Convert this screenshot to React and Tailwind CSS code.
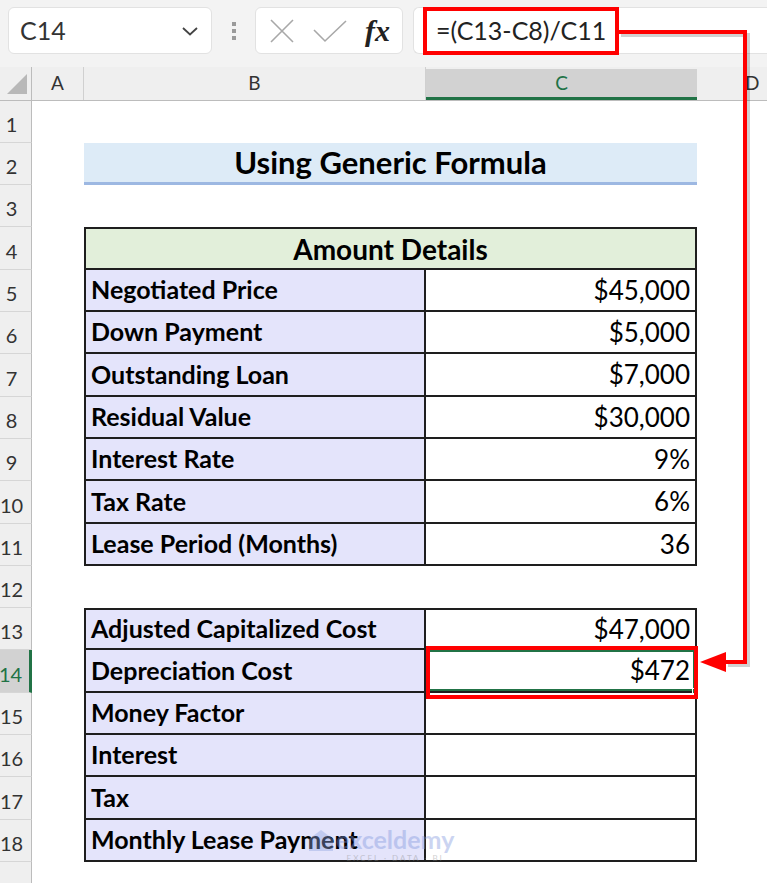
import React from "react";

const ROW_H = [42, 42, 42, 43, 42, 42, 43, 42, 42, 43, 42, 42, 42, 43, 42, 42, 43, 42];

const details = [
  ["Negotiated Price", "$45,000"],
  ["Down Payment", "$5,000"],
  ["Outstanding Loan", "$7,000"],
  ["Residual Value", "$30,000"],
  ["Interest Rate", "9%"],
  ["Tax Rate", "6%"],
  ["Lease Period (Months)", "36"],
];

const results = [
  ["Adjusted Capitalized Cost", "$47,000"],
  ["Depreciation Cost", "$472"],
  ["Money Factor", ""],
  ["Interest", ""],
  ["Tax", ""],
  ["Monthly Lease Payment", ""],
];

// one spreadsheet row: header + A + B + C + D
const Row = ({ n, h, children, active }) => (
  <div className="flex" style={{ height: h }}>
    <div
      className={
        "w-[32px] shrink-0 flex items-end justify-center pr-[8px] pb-[3px] text-[20px] border-b border-[#d6d6d6] " +
        (active
          ? "bg-[#d2d2d2] text-[#217346] border-r-[3px] border-r-[#217346]"
          : "bg-[#efefef] text-[#333] border-r border-r-[#bcbcbc]")
      }
    >
      {n}
    </div>
    <div className="w-[52px] shrink-0" />
    {children}
  </div>
);

const LabelCell = ({ text, top }) => (
  <div
    className={
      "w-[342px] shrink-0 bg-[#e4e4fb] border-l-2 border-r-2 border-b-2 border-[#1e1e1e] flex items-center pl-[5px] font-bold text-[25px] text-black whitespace-nowrap " +
      (top ? "border-t-2" : "")
    }
  >
    {text}
  </div>
);

const ValueCell = ({ text, top, selected }) => (
  <div
    className={
      "w-[271px] shrink-0 bg-white border-r-2 border-b-2 border-[#1e1e1e] flex items-center justify-end pr-[5px] text-[26px] text-black relative " +
      (top ? "border-t-2" : "")
    }
  >
    {selected && (
      <div className="absolute inset-0 border-2 border-[#217346]">
        <div className="absolute right-[-6px] bottom-[-6px] w-[7px] h-[7px] bg-[#217346] border border-white" />
      </div>
    )}
    <span className="relative">{text}</span>
  </div>
);

export default function App() {
  const cells = (i) => {
    const n = i + 1;
    if (n === 2)
      return (
        <div className="w-[613px] shrink-0 bg-[#ddebf7] border-b-[3px] border-[#9db8e2] flex items-center justify-center font-bold text-[31px] text-black">
          Using Generic Formula
        </div>
      );
    if (n === 4)
      return (
        <div className="w-[613px] shrink-0 bg-[#e2efda] border-2 border-[#1e1e1e] flex items-center justify-center font-bold text-[28px] text-black">
          Amount Details
        </div>
      );
    if (n >= 5 && n <= 11) {
      const [l, v] = details[n - 5];
      return (
        <>
          <LabelCell text={l} />
          <ValueCell text={v} />
        </>
      );
    }
    if (n >= 13) {
      const [l, v] = results[n - 13];
      return (
        <>
          <LabelCell text={l} top={n === 13} />
          <ValueCell text={v} top={n === 13} selected={n === 14} />
        </>
      );
    }
    return null;
  };

  return (
    <div className="w-[767px] h-[883px] overflow-hidden relative bg-white font-['Lato',sans-serif]">
      {/* formula bar */}
      <div className="h-[67px] bg-[#f3f3f3] flex items-start pt-[7px] pl-[8px]">
        <div className="w-[204px] h-[47px] bg-white rounded-[6px] border border-[#e2e2e2] flex items-center justify-between pl-[11px] pr-[12px]">
          <span className="text-[25px] text-[#333]">C14</span>
          <svg width="18" height="12" viewBox="0 0 18 12">
            <polyline points="2,3 9,9.5 16,3" fill="none" stroke="#444" strokeWidth="1.8" />
          </svg>
        </div>
        <div className="w-[43px] h-[47px] flex flex-col items-center justify-center gap-[3px]">
          <div className="w-[4px] h-[4px] bg-[#9a9a9a]" />
          <div className="w-[4px] h-[4px] bg-[#9a9a9a]" />
          <div className="w-[4px] h-[4px] bg-[#9a9a9a]" />
        </div>
        <div className="w-[148px] h-[47px] bg-white rounded-[6px] border border-[#e2e2e2] flex items-center pl-[13px] gap-[18px]">
          <svg width="26" height="26" viewBox="0 0 26 26">
            <path d="M2 2 L24 24 M24 2 L2 24" stroke="#a8a8a8" strokeWidth="1.6" fill="none" />
          </svg>
          <svg width="34" height="24" viewBox="0 0 34 24">
            <polyline points="1,11 12,22 33,2" stroke="#a8a8a8" strokeWidth="1.6" fill="none" />
          </svg>
          <span className="font-['Liberation_Serif',serif] italic font-bold text-[30px] text-[#222] leading-none">fx</span>
        </div>
        <div className="ml-[10px] flex-1 h-[47px] bg-white rounded-l-[6px] border border-r-0 border-[#e2e2e2] flex items-center pl-[22px]">
          <span className="text-[25px] text-[#222]">=(C13-C8)/C11</span>
        </div>
      </div>

      {/* column headers */}
      <div className="flex h-[34px] bg-[#efefef] border-b border-[#bcbcbc]">
        <div className="w-[32px] shrink-0 border-r border-[#bcbcbc] relative">
          <svg className="absolute left-[7px] bottom-[6px]" width="20" height="20" viewBox="0 0 20 20">
            <polygon points="20,0 20,20 0,20" fill="#b8b8b8" />
          </svg>
        </div>
        <div className="w-[52px] shrink-0 border-r border-[#d0d0d0] flex items-center justify-center text-[19px] text-[#333]">A</div>
        <div className="w-[342px] shrink-0 border-r border-[#d0d0d0] flex items-center justify-center text-[19px] text-[#333]">B</div>
        <div className="w-[271px] shrink-0 mt-[2px] bg-[#d2d2d2] border-b-[3px] border-[#217346] flex items-center justify-center text-[19px] text-[#217346]">C</div>
        <div className="flex-1 flex items-center pl-[48px] text-[19px] text-[#333]">D</div>
      </div>

      {/* grid */}
      {ROW_H.map((h, i) => (
        <Row key={i} n={i + 1} h={h} active={i === 13}>
          {cells(i)}
        </Row>
      ))}
      <Row n="" h={30} />

      {/* watermark */}
      <div className="absolute left-[308px] top-[826px] flex items-start gap-[2px] opacity-40 pointer-events-none">
        <svg width="26" height="28" viewBox="0 0 26 28">
          <path d="M1 13 L13 4 L25 13 L25 25 L1 25 Z" fill="#8ea4e0" />
        </svg>
        <div className="flex flex-col items-center">
          <span className="text-[25px] leading-[27px] font-bold text-[#7f96dd]">exceldemy</span>
          <span className="text-[8px] leading-[10px] tracking-[2px] text-[#8a8a8a]">EXCEL · DATA · BI</span>
        </div>
      </div>

      {/* annotation overlay */}
      <div className="absolute left-[423px] top-[7px] w-[196px] h-[48px] border-4 border-[#ff0000]" />
      <div className="absolute left-[426px] top-[646px] w-[272px] h-[53px] border-4 border-[#ff0000]" />
      <svg className="absolute left-0 top-0 pointer-events-none" width="767" height="883">
        <path d="M621 35 H748 V665 H728" fill="none" stroke="#000" strokeOpacity="0.18" strokeWidth="4" />
        <path d="M618 32 H745 V662 H722" fill="none" stroke="#ff0000" strokeWidth="4" />
        <polygon points="700,662 726,652 726,672" fill="#ff0000" />
      </svg>
    </div>
  );
}
